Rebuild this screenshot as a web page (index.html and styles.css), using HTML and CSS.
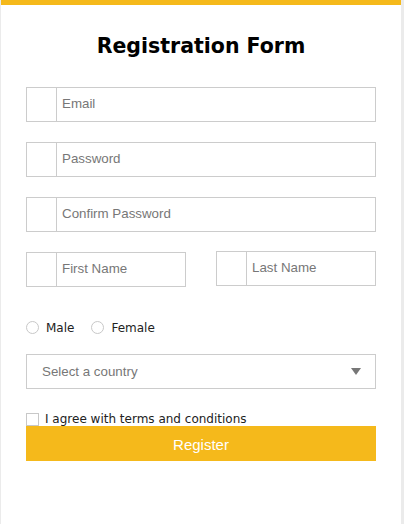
FILE: index.html
```html
<!DOCTYPE html>
<html lang="en">
<head>
<meta charset="utf-8">
<title>Registration Form</title>
<link rel="stylesheet" href="styles.css">
</head>
<body>
<div class="card">
  <h1 class="title">Registration Form</h1>
  <form class="form">
    <div class="field">
      <span class="icon"></span>
      <input class="input" type="email" placeholder="Email">
    </div>
    <div class="field">
      <span class="icon"></span>
      <input class="input" type="password" placeholder="Password">
    </div>
    <div class="field">
      <span class="icon"></span>
      <input class="input" type="password" placeholder="Confirm Password">
    </div>
    <div class="name-row">
      <div class="field field-half">
        <span class="icon"></span>
        <input class="input" type="text" placeholder="First Name">
      </div>
      <div class="field field-half field-up">
        <span class="icon"></span>
        <input class="input" type="text" placeholder="Last Name">
      </div>
    </div>
    <div class="radios">
      <label class="radio"><span class="radio-dot"></span>Male</label>
      <label class="radio"><span class="radio-dot"></span>Female</label>
    </div>
    <div class="select-box">
      <span class="select-text">Select a country</span>
      <span class="arrow"></span>
    </div>
    <label class="agree"><span class="check"></span>I agree with terms and conditions</label>
    <button class="btn" type="button">Register</button>
  </form>
</div>
</body>
</html>
```
FILE: styles.css
```css
html, body {
  margin: 0;
  padding: 0;
}
body {
  background: #ebebeb;
  font-family: "DejaVu Sans", Verdana, sans-serif;
}
.card {
  box-sizing: border-box;
  width: 400px;
  min-height: 524px;
  margin-left: 1px;
  background: #fff;
  border-top: 5px solid #f5b91b;
  padding: 0 25px 40px;
}
.title {
  margin: 29px 0 29px;
  font-size: 20.5px;
  line-height: 24px;
  font-weight: bold;
  text-align: center;
  color: #000;
}
.form {
  display: flex;
  flex-direction: column;
}
.field {
  box-sizing: border-box;
  display: flex;
  height: 35px;
  border: 1px solid #ccc;
  margin-bottom: 20px;
}
.icon {
  width: 29px;
  border-right: 1px solid #ccc;
  flex: none;
}
.input {
  flex: 1;
  min-width: 0;
  border: none;
  outline: none;
  padding: 0 0 2px 5px;
  margin: 0;
  font-family: "Liberation Sans", Arial, sans-serif;
  font-size: 13.33px;
  color: #333;
  background: transparent;
}
.input::placeholder {
  color: #777;
}
.name-row {
  display: flex;
  justify-content: space-between;
  align-items: flex-start;
}
.field-half {
  width: 160px;
  margin-bottom: 0;
}
.field-up {
  margin-top: -1px;
}
.radios {
  display: flex;
  align-items: center;
  gap: 17px;
  margin-top: 34px;
  height: 13px;
  font-size: 12px;
  color: #222;
}
.radio {
  display: flex;
  align-items: center;
  gap: 7px;
}
.radio-dot {
  box-sizing: border-box;
  width: 13px;
  height: 13px;
  border: 1.5px solid #c8c8c8;
  border-radius: 50%;
}
.select-box {
  box-sizing: border-box;
  display: flex;
  align-items: center;
  justify-content: space-between;
  height: 35px;
  margin-top: 20px;
  border: 1px solid #ccc;
  padding: 0 14px 0 15px;
  font-family: "Liberation Sans", Arial, sans-serif;
  font-size: 13.33px;
  color: #777;
}
.arrow {
  width: 0;
  height: 0;
  border-left: 5px solid transparent;
  border-right: 5px solid transparent;
  border-top: 7px solid #777;
}
.agree {
  display: flex;
  align-items: center;
  gap: 6px;
  height: 14px;
  margin-top: 23px;
  font-size: 12px;
  color: #222;
}
.check {
  box-sizing: border-box;
  width: 13px;
  height: 13px;
  border: 1.5px solid #c8c8c8;
}
.btn {
  height: 35px;
  margin-top: 0;
  border: none;
  background: #f5b91b;
  color: #fff;
  font-family: "Liberation Sans", Arial, sans-serif;
  font-size: 15px;
  padding: 1px 0 0;
}
```
